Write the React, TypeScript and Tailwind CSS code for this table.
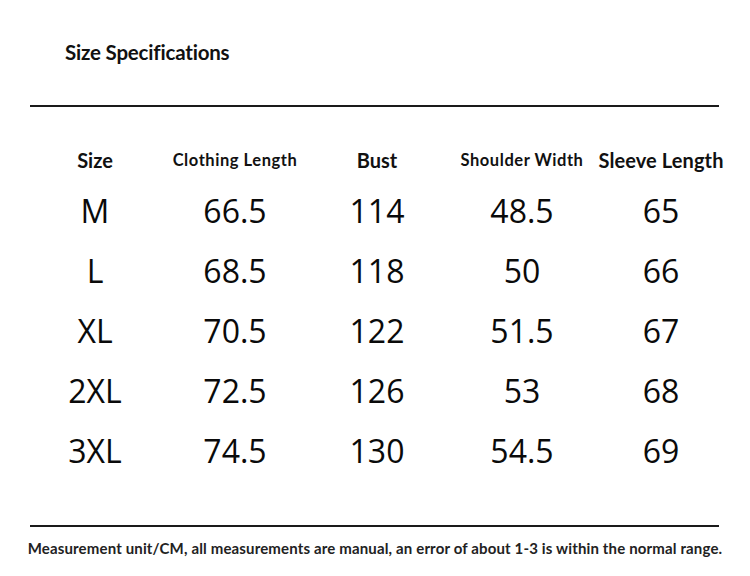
const headers = [
  { label: "Size", cls: "text-[20px]" },
  { label: "Clothing Length", cls: "text-[16.5px] tracking-[0.55px]" },
  { label: "Bust", cls: "text-[20px]" },
  { label: "Shoulder Width", cls: "text-[16.5px] tracking-[0.55px]" },
  { label: "Sleeve Length", cls: "text-[20px] tracking-[0.1px]" },
];

const rows = [
  ["M", "66.5", "114", "48.5", "65"],
  ["L", "68.5", "118", "50", "66"],
  ["XL", "70.5", "122", "51.5", "67"],
  ["2XL", "72.5", "126", "53", "68"],
  ["3XL", "74.5", "130", "54.5", "69"],
];

export default function App() {
  return (
    <div className="w-[750px] h-[576px] bg-white flex flex-col font-['Lato','Liberation_Sans',sans-serif] text-[#111]">
      {/* title */}
      <div className="h-[105px] flex items-start pl-[65px] pt-[37px]">
        <h1 className="text-[20.5px] font-bold leading-[30px] tracking-[-0.2px]">Size Specifications</h1>
      </div>
      <div className="mx-[30px] w-[689px] h-[2px] bg-[#1a1a1a]" />

      {/* table */}
      <div className="mt-[32px] ml-[30px] grid grid-cols-[130px_150px_134px_156px_122px]">
        {headers.map((h) => (
          <div key={h.label} className={`h-[42px] flex items-center justify-center font-bold whitespace-nowrap ${h.cls}`}>
            {h.label}
          </div>
        ))}
        {rows.map((r) =>
          r.map((v, i) => (
            <div
              key={r[0] + i}
              className="h-[60px] flex items-center justify-center text-[32px] font-['Open_Sans',sans-serif] text-[#0a0a0a]"
            >
              {v}
            </div>
          ))
        )}
      </div>

      {/* footer */}
      <div className="mt-[44px] mx-[30px] w-[689px] h-[2px] bg-[#1a1a1a]" />
      <p className="mt-[12px] text-center text-[15px] tracking-[0.15px] font-bold text-[#222] leading-[18px] whitespace-nowrap">
        Measurement unit/CM, all measurements are manual, an error of about 1-3 is within the normal range.
      </p>
    </div>
  );
}
